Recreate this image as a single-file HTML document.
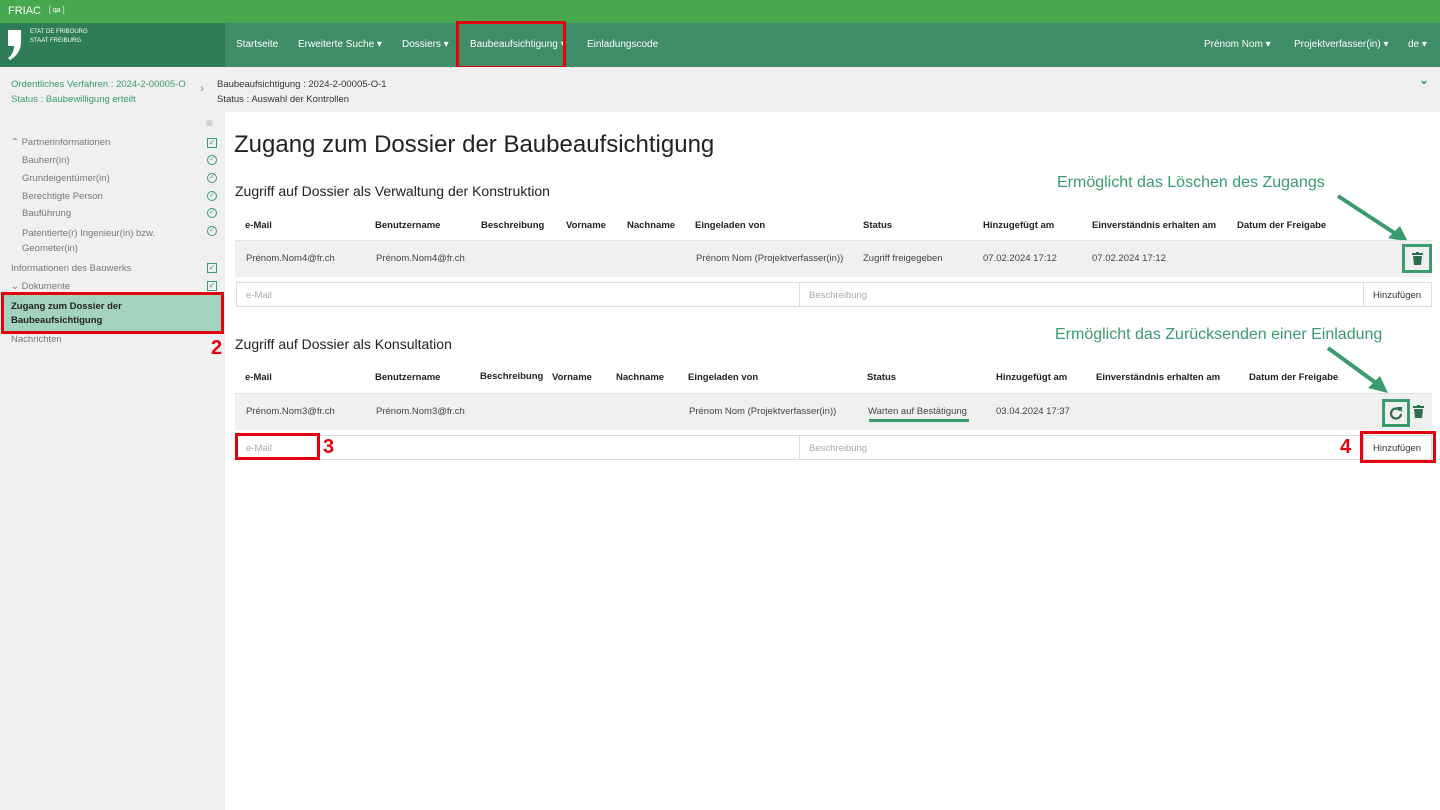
<!DOCTYPE html>
<html><head><meta charset="utf-8"><style>
*{margin:0;padding:0;box-sizing:border-box}
body{width:1440px;height:810px;position:relative;overflow:hidden;font-family:"Liberation Sans",sans-serif;background:#fff;color:#222}
.a{position:absolute;white-space:nowrap}
.top{left:0;top:0;width:1440px;height:23px;background:#47a84f;color:#fff;font-size:11px}
.nav{left:0;top:23px;width:1440px;height:44px;background:#3e8d68}
.logo{left:0;top:23px;width:225px;height:44px;background:#2e7d57}
.nv{color:#fff;font-size:10px;top:39px}
.bc{left:0;top:67px;width:1440px;height:45px;background:#f0f0f0;font-size:9.5px}
.side{left:0;top:112px;width:225px;height:698px;background:#f0f0f0}
.si{font-size:9.5px;color:#777}
.ck{width:10px;height:10px;border:1px solid #3a9b6e;font-size:8px;color:#3a9b6e;line-height:8px;text-align:center}
.cc{width:10px;height:10px;border:1px solid #3a9b6e;border-radius:50%;font-size:7px;color:#3a9b6e;line-height:8px;text-align:center}
.th{font-size:9.5px;font-weight:bold;color:#222}
.td{font-size:9.5px;color:#444}
.row{background:#f0f0f0;border-top:1px solid #e2e2e2}
.inp{border:1px solid #ddd;background:#fff;font-size:9.5px;color:#aaa;padding:7px 9px}
.red{border:3px solid #e3000f}
.num{color:#e3000f;font-weight:bold;font-size:20px}
.ann{color:#3a9b6e;font-size:16px}
</style></head><body>
<div class="a top"><span class="a" style="left:8px;top:5px">FRIAC</span><span class="a" style="left:49px;top:7px;font-size:7px">[ qa ]</span></div>
<div class="a nav"></div>
<div class="a logo">
<svg class="a" style="left:7px;top:6px" width="16" height="32"><path d="M1 1h13v12c0 8-4 14-11 18l-2-2c4-3 6-7 6-12H1z" fill="#fff"/></svg>
<div class="a" style="left:30px;top:5px;color:#fff;font-size:6px;line-height:9px">ETAT DE FRIBOURG<br>STAAT FREIBURG</div></div>
<div class="a nv" style="left:236px">Startseite</div>
<div class="a nv" style="left:298px">Erweiterte Suche ▾</div>
<div class="a nv" style="left:402px">Dossiers ▾</div>
<div class="a nv" style="left:470px">Baubeaufsichtigung ▾</div>
<div class="a nv" style="left:587px">Einladungscode</div>
<div class="a nv" style="left:1204px">Prénom Nom ▾</div>
<div class="a nv" style="left:1294px">Projektverfasser(in) ▾</div>
<div class="a nv" style="left:1408px">de ▾</div>
<div class="a red" style="left:456px;top:21px;width:110px;height:48px"></div>
<div class="a num" style="left:557px;top:72px">1</div>
<div class="a bc">
<div class="a" style="left:11px;top:10px;color:#3a9b6e;line-height:15px">Ordentliches Verfahren : 2024-2-00005-O<br>Status : Baubewilligung erteilt</div>
<div class="a" style="left:200px;top:14px;color:#999;font-size:12px">›</div>
<div class="a" style="left:217px;top:10px;color:#333;line-height:15px">Baubeaufsichtigung : 2024-2-00005-O-1<br>Status : Auswahl der Kontrollen</div>
<div class="a" style="left:1419px;top:6px;color:#3a9b6e;font-size:12px;font-weight:bold">⌄</div>
</div>
<div class="a side">
<div class="a" style="left:206px;top:4px;color:#aaa;font-size:12px">≡</div>
<div class="a si" style="left:11px;top:25px">⌃ Partnerinformationen</div><div class="a ck" style="left:207px;top:26px">✓</div>
<div class="a si" style="left:22px;top:43px">Bauherr(in)</div><div class="a cc" style="left:207px;top:43px">✓</div>
<div class="a si" style="left:22px;top:61px">Grundeigentümer(in)</div><div class="a cc" style="left:207px;top:61px">✓</div>
<div class="a si" style="left:22px;top:79px">Berechtigte Person</div><div class="a cc" style="left:207px;top:79px">✓</div>
<div class="a si" style="left:22px;top:96px">Bauführung</div><div class="a cc" style="left:207px;top:96px">✓</div>
<div class="a si" style="left:22px;top:114px;line-height:15px">Patentierte(r) Ingenieur(in) bzw.<br>Geometer(in)</div><div class="a cc" style="left:207px;top:114px">✓</div>
<div class="a si" style="left:11px;top:151px">Informationen des Bauwerks</div><div class="a ck" style="left:207px;top:151px">✓</div>
<div class="a si" style="left:11px;top:169px">⌄ Dokumente</div><div class="a ck" style="left:207px;top:169px">✓</div>
<div class="a" style="left:3px;top:181px;width:219px;height:39px;background:#a3d3bc"></div>
<div class="a" style="left:11px;top:188px;font-size:9.5px;font-weight:bold;line-height:14px">Zugang zum Dossier der<br>Baubeaufsichtigung</div>
<div class="a red" style="left:1px;top:180px;width:223px;height:42px"></div>
<div class="a si" style="left:11px;top:222px">Nachrichten</div>
<div class="a num" style="left:211px;top:225px">2</div>
</div>
<div class="a" style="left:234px;top:131px;font-size:24px;color:#222">Zugang zum Dossier der Baubeaufsichtigung</div>
<div class="a" style="left:235px;top:183px;font-size:14px">Zugriff auf Dossier als Verwaltung der Konstruktion</div>
<div class="a ann" style="left:1057px;top:174px">Ermöglicht das Löschen des Zugangs</div>
<svg class="a" style="left:1330px;top:190px" width="100" height="60"><line x1="8" y1="6" x2="66" y2="44" stroke="#3a9b6e" stroke-width="4"/><polygon points="78,52 58,48 70,36" fill="#3a9b6e"/></svg>
<div class="a th" style="left:245px;top:220px">e-Mail</div><div class="a th" style="left:375px;top:220px">Benutzername</div><div class="a th" style="left:481px;top:220px">Beschreibung</div><div class="a th" style="left:566px;top:220px">Vorname</div><div class="a th" style="left:627px;top:220px">Nachname</div><div class="a th" style="left:695px;top:220px">Eingeladen von</div><div class="a th" style="left:863px;top:220px">Status</div><div class="a th" style="left:983px;top:220px">Hinzugefügt am</div><div class="a th" style="left:1092px;top:220px">Einverständnis erhalten am</div><div class="a th" style="left:1237px;top:220px">Datum der Freigabe</div>
<div class="a row" style="left:235px;top:240px;width:1197px;height:37px"></div>
<div class="a td" style="left:246px;top:253px">Prénom.Nom4@fr.ch</div><div class="a td" style="left:376px;top:253px">Prénom.Nom4@fr.ch</div><div class="a td" style="left:696px;top:253px">Prénom Nom (Projektverfasser(in))</div><div class="a td" style="left:863px;top:253px">Zugriff freigegeben</div><div class="a td" style="left:983px;top:253px">07.02.2024 17:12</div><div class="a td" style="left:1092px;top:253px">07.02.2024 17:12</div>
<div class="a" style="left:1402px;top:244px;width:30px;height:29px;border:3px solid #3a9b6e"></div>
<svg class="a" style="left:1412px;top:252px" width="11" height="13"><rect x="0" y="1" width="11" height="2" fill="#2e6e4c"/><rect x="4" y="0" width="3" height="2" fill="#2e6e4c"/><path d="M1 4h9l-1 9h-7z" fill="#2e6e4c"/></svg>
<div class="a inp" style="left:236px;top:282px;width:564px;height:25px">e-Mail</div>
<div class="a inp" style="left:799px;top:282px;width:565px;height:25px">Beschreibung</div>
<div class="a inp" style="left:1363px;top:282px;width:69px;height:25px;color:#333">Hinzufügen</div>
<div class="a" style="left:235px;top:336px;font-size:14px">Zugriff auf Dossier als Konsultation</div>
<div class="a ann" style="left:1055px;top:326px">Ermöglicht das Zurücksenden einer Einladung</div>
<svg class="a" style="left:1320px;top:343px" width="90" height="60"><line x1="8" y1="5" x2="56" y2="40" stroke="#3a9b6e" stroke-width="4"/><polygon points="68,50 48,45 60,33" fill="#3a9b6e"/></svg>
<div class="a th" style="left:245px;top:372px">e-Mail</div><div class="a th" style="left:375px;top:372px">Benutzername</div><div class="a th" style="left:480px;top:371px">Beschreibung</div><div class="a th" style="left:552px;top:372px">Vorname</div><div class="a th" style="left:616px;top:372px">Nachname</div><div class="a th" style="left:688px;top:372px">Eingeladen von</div><div class="a th" style="left:867px;top:372px">Status</div><div class="a th" style="left:996px;top:372px">Hinzugefügt am</div><div class="a th" style="left:1096px;top:372px">Einverständnis erhalten am</div><div class="a th" style="left:1249px;top:372px">Datum der Freigabe</div>
<div class="a row" style="left:235px;top:393px;width:1197px;height:37px"></div>
<div class="a td" style="left:246px;top:406px">Prénom.Nom3@fr.ch</div><div class="a td" style="left:376px;top:406px">Prénom.Nom3@fr.ch</div><div class="a td" style="left:689px;top:406px">Prénom Nom (Projektverfasser(in))</div><div class="a td" style="left:868px;top:406px">Warten auf Bestätigung</div><div class="a td" style="left:996px;top:406px">03.04.2024 17:37</div>
<div class="a" style="left:869px;top:419px;width:100px;height:3px;background:#3a9b6e"></div>
<div class="a" style="left:1382px;top:399px;width:28px;height:28px;border:3px solid #3a9b6e"></div>
<svg class="a" style="left:1389px;top:406px" width="14" height="14"><path d="M11 4.5A5 5 0 1 0 12 8" fill="none" stroke="#2e6e4c" stroke-width="2.2"/><polygon points="8,1 13,1 13,6" fill="#2e6e4c"/></svg>
<svg class="a" style="left:1413px;top:405px" width="11" height="13"><rect x="0" y="1" width="11" height="2" fill="#2e6e4c"/><rect x="4" y="0" width="3" height="2" fill="#2e6e4c"/><path d="M1 4h9l-1 9h-7z" fill="#2e6e4c"/></svg>
<div class="a inp" style="left:236px;top:435px;width:564px;height:25px">e-Mail</div>
<div class="a red" style="left:235px;top:433px;width:85px;height:27px"></div>
<div class="a num" style="left:323px;top:436px">3</div>
<div class="a inp" style="left:799px;top:435px;width:565px;height:25px">Beschreibung</div>
<div class="a inp" style="left:1363px;top:435px;width:69px;height:25px;color:#333">Hinzufügen</div>
<div class="a red" style="left:1360px;top:431px;width:76px;height:32px"></div>
<div class="a num" style="left:1340px;top:436px">4</div>
</body></html>
